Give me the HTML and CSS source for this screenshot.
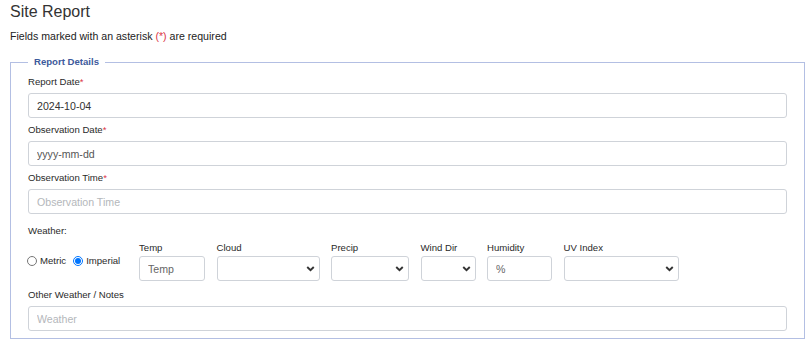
FILE: index.html
```html
<!DOCTYPE html>
<html>
<head>
<meta charset="utf-8">
<link rel="stylesheet" href="styles.css">
</head>
<body>
<div class="page">
  <h1 class="title">Site Report</h1>
  <p class="note">Fields marked with an asterisk <span class="req">(*)</span> are required</p>
  <fieldset class="panel">
    <legend class="panel-legend">Report Details</legend>
    <div class="field">
      <label class="lbl">Report Date<span class="req">*</span></label>
      <input class="ctl" type="text" value="2024-10-04">
    </div>
    <div class="field">
      <label class="lbl">Observation Date<span class="req">*</span></label>
      <input class="ctl ph-dark" type="text" placeholder="yyyy-mm-dd">
    </div>
    <div class="field">
      <label class="lbl">Observation Time<span class="req">*</span></label>
      <input class="ctl" type="text" placeholder="Observation Time">
    </div>
    <div class="lbl lbl-weather">Weather:</div>
    <div class="wx-row">
      <div class="units">
        <label class="radio"><input class="radio-in" type="radio" name="units">Metric</label>
        <label class="radio"><input class="radio-in" type="radio" name="units" checked>Imperial</label>
      </div>
      <div class="col col-temp">
        <label class="lbl lbl-col">Temp</label>
        <input class="ctl ph-mid" type="text" placeholder="Temp">
      </div>
      <div class="col col-cloud">
        <label class="lbl lbl-col">Cloud</label>
        <div class="sel"><select class="ctl sel-ctl"><option></option></select><svg class="chev" viewBox="0 0 10 7" width="9" height="6"><path d="M1.2 1.2 L5 5 L8.8 1.2" fill="none" stroke="#333" stroke-width="2.2"/></svg></div>
      </div>
      <div class="col col-precip">
        <label class="lbl lbl-col">Precip</label>
        <div class="sel"><select class="ctl sel-ctl"><option></option></select><svg class="chev" viewBox="0 0 10 7" width="9" height="6"><path d="M1.2 1.2 L5 5 L8.8 1.2" fill="none" stroke="#333" stroke-width="2.2"/></svg></div>
      </div>
      <div class="col col-wind">
        <label class="lbl lbl-col">Wind Dir</label>
        <div class="sel"><select class="ctl sel-ctl"><option></option></select><svg class="chev" viewBox="0 0 10 7" width="9" height="6"><path d="M1.2 1.2 L5 5 L8.8 1.2" fill="none" stroke="#333" stroke-width="2.2"/></svg></div>
      </div>
      <div class="col col-hum">
        <label class="lbl lbl-col">Humidity</label>
        <input class="ctl ph-mid" type="text" placeholder="%">
      </div>
      <div class="col col-uv">
        <label class="lbl lbl-col">UV Index</label>
        <div class="sel"><select class="ctl sel-ctl"><option></option></select><svg class="chev" viewBox="0 0 10 7" width="9" height="6"><path d="M1.2 1.2 L5 5 L8.8 1.2" fill="none" stroke="#333" stroke-width="2.2"/></svg></div>
      </div>
    </div>
    <div class="field field-last">
      <label class="lbl">Other Weather / Notes</label>
      <input class="ctl" type="text" placeholder="Weather">
    </div>
  </fieldset>
</div>
</body>
</html>
```

FILE: styles.css
```css
* { box-sizing: border-box; }
html, body { margin: 0; padding: 0; background: #fff; }
body {
  font-family: "Liberation Sans", Arial, sans-serif;
  color: #222;
}
.page { padding: 0 6px 0 10px; }
.title {
  font-size: 16px;
  line-height: 20px;
  font-weight: normal;
  color: #333;
  margin: 2px 0 0;
}
.note {
  font-size: 10.6px;
  line-height: 14px;
  margin: 7px 0 0;
  color: #222;
}
.req { color: #dc3545; }
.panel {
  margin: 12px 0 0;
  padding: 7px 17px 7px 17px;
  border: 1px solid #b3bfe3;
  min-inline-size: 0;
}
.panel-legend {
  font-size: 9.6px;
  line-height: 14px;
  font-weight: bold;
  color: #3d5a9c;
  padding: 0 6px;
  margin-left: 0;
}
.field { display: flex; flex-direction: column; margin-bottom: 6px; }
.field-last { margin-bottom: 0; }
.lbl {
  display: block;
  font-size: 9.6px;
  line-height: 12px;
  margin-bottom: 5px;
  color: #2a2a2a;
}
.lbl-weather { margin: 11px 0 5px; }
.lbl-col { margin-bottom: 2px; }
.ctl {
  display: block;
  width: 100%;
  height: 25px;
  border: 1px solid #cfd3d9;
  border-radius: 3px;
  background: #fff;
  font-family: "Liberation Sans", Arial, sans-serif;
  font-size: 10.6px;
  color: #333;
  padding: 0 8px;
  outline: none;
}
.ctl::placeholder { color: #b4b7bb; }
.ph-dark::placeholder { color: #555; }
.ph-mid::placeholder { color: #666; }
.wx-row {
  display: flex;
  align-items: flex-start;
  gap: 11.5px;
  margin-bottom: 8px;
}
.units {
  width: 99.5px;
  padding-top: 14px;
  display: flex;
  align-items: center;
}
.radio {
  display: flex;
  align-items: center;
  font-size: 9.6px;
  line-height: 10px;
  color: #2a2a2a;
  margin-right: 8px;
}
.radio-in {
  width: 10px;
  height: 10px;
  margin: 0 3px 0 -1px;
}
.col { display: flex; flex-direction: column; }
.col-temp { width: 66px; }
.col-cloud { width: 103px; }
.col-precip { width: 78px; }
.col-wind { width: 55px; }
.col-hum { width: 65px; }
.col-uv { width: 115px; }
.sel { position: relative; }
.sel-ctl { appearance: none; -webkit-appearance: none; }
.chev {
  position: absolute;
  right: 5px;
  top: 10px;
  pointer-events: none;
}
```
